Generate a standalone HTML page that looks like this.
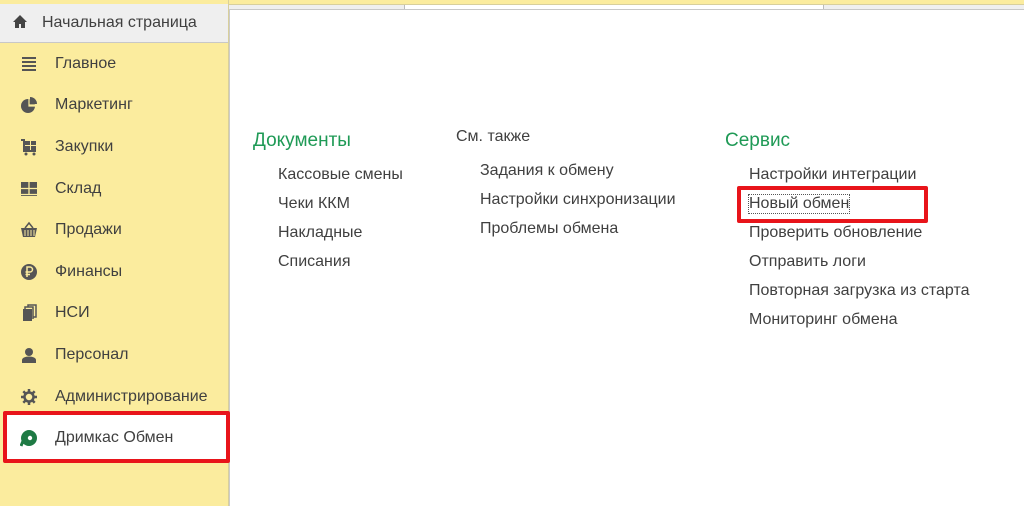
<!DOCTYPE html>
<html><head><meta charset="utf-8"><style>
body{margin:0;width:1024px;height:506px;overflow:hidden;background:#fff;font-family:"Liberation Sans",sans-serif;position:relative;color:#404040}
.a{position:absolute;white-space:nowrap}
#side{position:absolute;left:0;top:0;width:228px;height:506px;background:#fbec9e;border-right:1px solid #d8cf9c}
.it{position:absolute;left:55px;font-size:16px;color:#404040}
.ic{position:absolute;left:20px;width:18px;height:18px}
.t{font-size:16px;color:#404040;position:absolute;white-space:nowrap}
.h{font-size:19px;color:#1f9a56;position:absolute}
</style></head><body>
<div class="a" style="left:0;top:0;width:1024px;height:4px;background:#fbec9e;border-bottom:1px solid #d8cf9c"></div>
<div class="a" style="left:229px;top:5px;width:795px;height:4px;background:#efefef;border-bottom:1px solid #c8c8c8"></div>
<div class="a" style="left:404px;top:5px;width:418px;height:4px;background:#fff;border-left:1px solid #bbb;border-right:1px solid #bbb"></div>
<div class="a" style="left:229px;top:9px;width:1px;height:497px;background:#ccc"></div>
<div id="side">
<div class="a" style="left:0;top:4px;width:228px;height:38px;background:#efefef;border-bottom:1px solid #c8c8c8"></div>
<svg class="a" style="left:12px;top:14px" width="16" height="15" viewBox="0 0 16 15"><path d="M8 1L1 8h2v6h4v-4h2v4h4V8h2z" fill="#444"/></svg>
<div class="a" style="left:42px;top:14px;font-size:16px;color:#404040">Начальная страница</div>
<div class="a" style="left:3px;top:411px;width:219px;height:44px;border:4px solid #e8141a;border-radius:2px;background:#fff"></div>
<svg class="ic" style="top:55px" viewBox="0 0 18 18"><path d="M2 3h14M2 7h14M2 11h14M2 15h14" stroke="#555" stroke-width="2"/></svg>
<svg class="ic" style="top:96px" viewBox="0 0 18 18"><circle cx="8" cy="10" r="7" fill="#555"/><path d="M10 1a7 7 0 0 1 7 7h-7z" fill="#555"/><path d="M9 9h8v1H9zM9 2v8" stroke="#fbec9e" stroke-width="1.2"/></svg>
<svg class="ic" style="top:138px" viewBox="0 0 18 18"><path d="M1 2h3v11h12" stroke="#555" stroke-width="2" fill="none"/><rect x="5" y="3" width="11" height="9" fill="#555"/><path d="M10.5 3v9M5 7.5h11" stroke="#fbec9e"/><circle cx="6" cy="16" r="1.5" fill="#555"/><circle cx="14" cy="16" r="1.5" fill="#555"/></svg>
<svg class="ic" style="top:180px" viewBox="0 0 18 18"><rect x="1" y="2" width="16" height="14" fill="#555"/><path d="M9 2v12M1 8.5h16M1 14.5h16" stroke="#fbec9e" stroke-width="1.3"/></svg>
<svg class="ic" style="top:221px" viewBox="0 0 18 18"><path d="M5 7L9 2l4 5" stroke="#555" fill="none" stroke-width="1.5"/><path d="M1 7h16l-2 9H3z" fill="#555"/><path d="M5 9v6M8 9v6M11 9v6M14 9v6" stroke="#fbec9e"/></svg>
<svg class="ic" style="top:263px" viewBox="0 0 18 18"><circle cx="9" cy="9" r="8" fill="#555"/><path d="M7 14V4h3a2.5 2.5 0 0 1 0 5H5.5M5.5 11.5H10" stroke="#fbec9e" stroke-width="1.5" fill="none"/></svg>
<svg class="ic" style="top:304px" viewBox="0 0 18 18"><rect x="3" y="5" width="9" height="12" fill="#555"/><path d="M5 5V3h8v12M8 3V1h8v12h-3" stroke="#555" stroke-width="1.5" fill="none"/></svg>
<svg class="ic" style="top:346px" viewBox="0 0 18 18"><circle cx="9" cy="6" r="4" fill="#555"/><path d="M2 17v-3c0-2 3-3.5 7-3.5s7 1.5 7 3.5v3z" fill="#555"/></svg>
<svg class="ic" style="top:388px" viewBox="0 0 18 18"><path d="M9 1v3M9 14v3M1 9h3M14 9h3M3.3 3.3l2.2 2.2M12.5 12.5l2.2 2.2M3.3 14.7l2.2-2.2M12.5 5.5l2.2-2.2" stroke="#555" stroke-width="2.5"/><circle cx="9" cy="9" r="4.5" fill="none" stroke="#555" stroke-width="2.5"/></svg>
<svg class="ic" style="top:429px" viewBox="0 0 18 18"><path d="M9 1a8 8 0 1 1-8 8V9c0-4 3.5-8 8-8z" fill="#1e7a44"/><path d="M1 17L3 12" stroke="#1e7a44" stroke-width="3"/><circle cx="10" cy="9" r="2.2" fill="#fff"/></svg>
<div class="it" style="top:55px">Главное</div>
<div class="it" style="top:96px">Маркетинг</div>
<div class="it" style="top:138px">Закупки</div>
<div class="it" style="top:180px">Склад</div>
<div class="it" style="top:221px">Продажи</div>
<div class="it" style="top:263px">Финансы</div>
<div class="it" style="top:304px">НСИ</div>
<div class="it" style="top:346px">Персонал</div>
<div class="it" style="top:388px">Администрирование</div>
<div class="it" style="top:429px">Дримкас Обмен</div>
</div>
<div class="h" style="left:253px;top:130px">Документы</div>
<div class="t" style="left:278px;top:166px">Кассовые смены</div>
<div class="t" style="left:278px;top:195px">Чеки ККМ</div>
<div class="t" style="left:278px;top:224px">Накладные</div>
<div class="t" style="left:278px;top:253px">Списания</div>
<div class="t" style="left:456px;top:128px">См. также</div>
<div class="t" style="left:480px;top:162px">Задания к обмену</div>
<div class="t" style="left:480px;top:191px">Настройки синхронизации</div>
<div class="t" style="left:480px;top:220px">Проблемы обмена</div>
<div class="h" style="left:725px;top:130px">Сервис</div>
<div class="t" style="left:749px;top:166px">Настройки интеграции</div>
<div class="a" style="left:737px;top:186px;width:183px;height:29px;border:4px solid #e8141a;border-radius:2px"></div>
<div class="t" style="left:749px;top:195px;outline:1px dotted #555">Новый обмен</div>
<div class="t" style="left:749px;top:224px">Проверить обновление</div>
<div class="t" style="left:749px;top:253px">Отправить логи</div>
<div class="t" style="left:749px;top:282px">Повторная загрузка из старта</div>
<div class="t" style="left:749px;top:311px">Мониторинг обмена</div>
</body></html>
